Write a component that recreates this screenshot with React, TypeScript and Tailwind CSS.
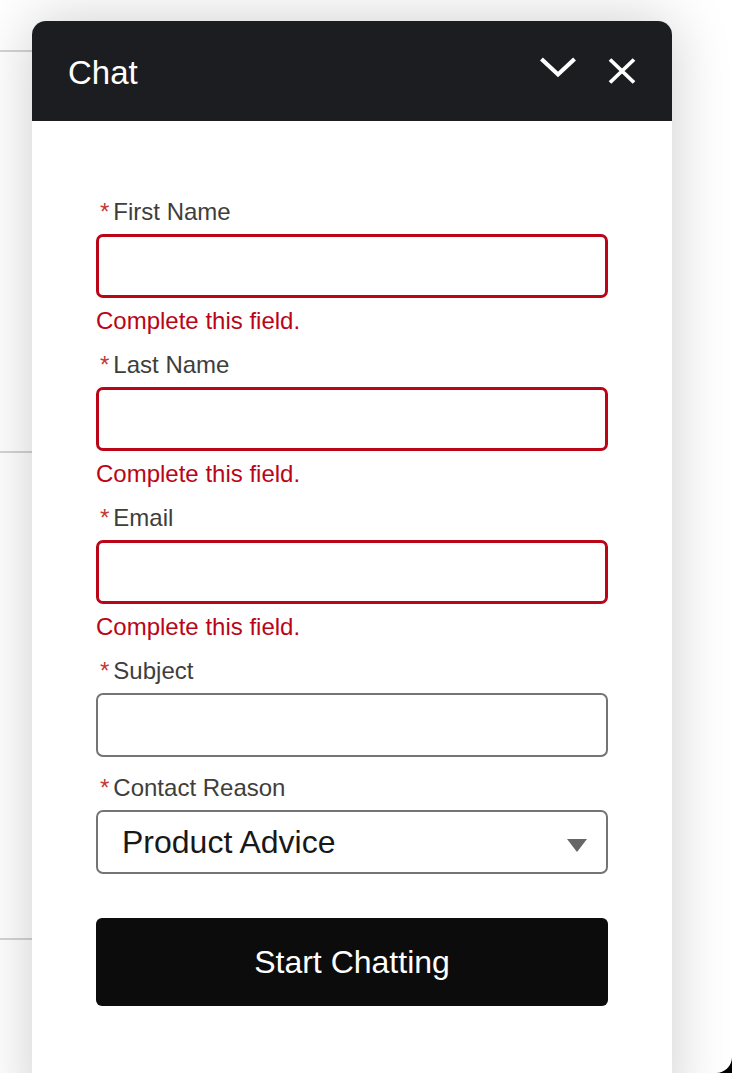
import React from "react";

const font = { fontFamily: '"Liberation Sans", Arial, Helvetica, sans-serif' };

function Label({ text }: { text: string }) {
  return (
    <div className="flex items-baseline pl-[4px] h-[28px] text-[24px] leading-[28px] text-[#3e3e3c]">
      <span className="text-[#c23934] mr-[4px]">*</span>
      <span>{text}</span>
    </div>
  );
}

function Field({ label, error }: { label: string; error?: boolean }) {
  return (
    <div className="flex flex-col">
      <Label text={label} />
      <div
        className={
          error
            ? "mt-[8px] h-[64px] rounded-[7px] border-[3px] border-[#ba0517] bg-white"
            : "mt-[8px] h-[64px] rounded-[7px] border-2 border-[#747474] bg-white"
        }
      />
      {error && (
        <div className="mt-[9px] h-[28px] text-[24px] leading-[28px] text-[#ba0517]">
          Complete this field.
        </div>
      )}
    </div>
  );
}

export default function App() {
  return (
    <div className="w-[732px] h-[1073px] bg-black" style={font}>
      <div className="relative w-[732px] h-[1073px] bg-white rounded-br-[16px] overflow-hidden">
        {/* background page content */}
        <div className="flex flex-col w-[400px]">
          <div className="h-[52px] border-b-2 border-[#d4d4d4]" />
          <div className="h-[401px] border-b-2 border-[#d4d4d4]" />
          <div className="h-[487px] border-b-2 border-[#d4d4d4]" />
        </div>

        {/* chat widget */}
        <div className="absolute left-[32px] top-[21px] w-[640px] h-[1100px] bg-white rounded-t-[14px] shadow-[0_0_60px_rgba(0,0,0,0.2)] flex flex-col">
          <div className="h-[100px] bg-[#1c1d21] rounded-t-[14px] flex items-center justify-between pl-[36px] pr-[34px]">
            <span className="text-white text-[33px] leading-none mt-[2px]">Chat</span>
            <div className="flex items-center gap-[29px]">
              <svg width="38" height="28" viewBox="0 0 38 28">
                <path d="M4 3.5 L19 17.5 L34 3.5" fill="none" stroke="#fff" strokeWidth="4.2" strokeLinecap="square" strokeLinejoin="miter" />
              </svg>
              <svg width="32" height="28" viewBox="0 0 32 28">
                <path d="M4 2.5 L28 25.5 M28 2.5 L4 25.5" fill="none" stroke="#fff" strokeWidth="3.8" strokeLinecap="butt" />
              </svg>
            </div>
          </div>

          <div className="flex flex-col px-[64px] pt-[77px]">
            <Field label="First Name" error />
            <div className="h-[16px]" />
            <Field label="Last Name" error />
            <div className="h-[16px]" />
            <Field label="Email" error />
            <div className="h-[16px]" />
            <Field label="Subject" />
            <div className="h-[17px]" />
            <div className="flex flex-col">
              <Label text="Contact Reason" />
              <div className="mt-[8px] h-[64px] rounded-[7px] border-2 border-[#747474] bg-white flex items-center justify-between pl-[24px] pr-[18px]">
                <span className="text-[32px] leading-none text-[#181818]">Product Advice</span>
                <svg width="22" height="14" viewBox="0 0 22 14" className="mt-[8px]">
                  <path d="M1 0 L21 0 L11 13 Z" fill="#666" />
                </svg>
              </div>
            </div>
            <button className="mt-[44px] h-[88px] rounded-[6px] bg-[#0d0c0c] text-white text-[32px] leading-none flex items-center justify-center">
              Start Chatting
            </button>
          </div>
        </div>
      </div>
    </div>
  );
}
